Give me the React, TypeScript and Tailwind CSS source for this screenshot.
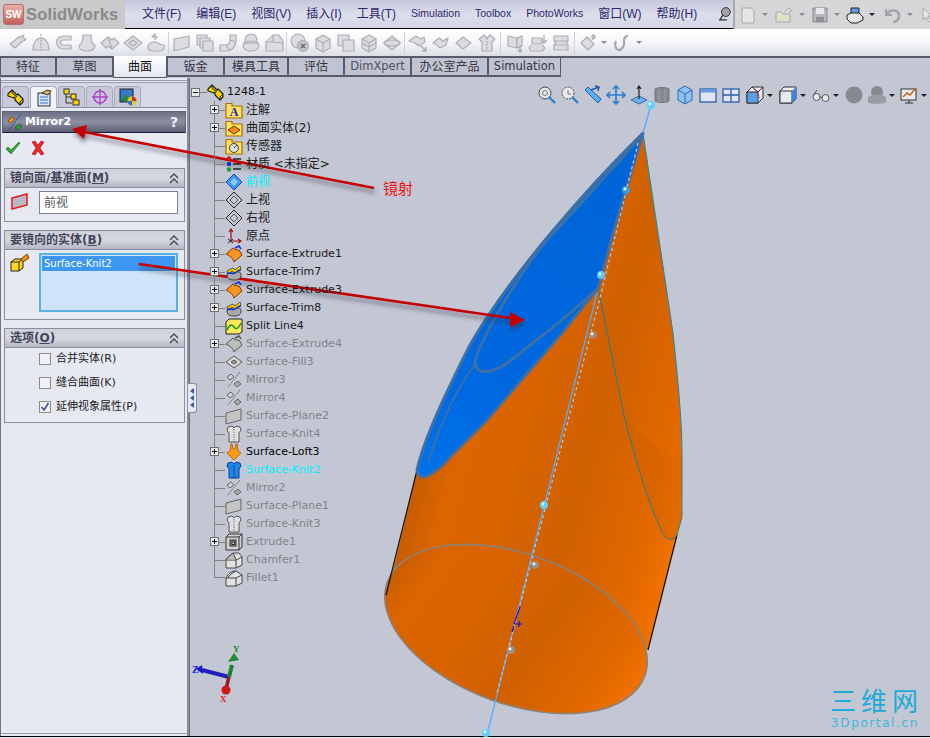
import React from "react";

const GS = { fill: "#dcdce0", stroke: "#adadb4", strokeWidth: 1.2, strokeLinejoin: "round" as const };

const grayIcons: React.ReactNode[] = [
  <g {...GS}><path d="M2 11l9-7 5 3-9 8z" /><path d="M11 4l5-2-1 3 3 1-2 2" /></g>,
  <g {...GS}><path d="M2 17c0-8 4-12 8-12s8 4 8 12z" /><path d="M10 1v18" strokeDasharray="2 1" /></g>,
  <g {...GS}><path d="M17 3H9a6 6 0 0 0 0 13h8v-4H9a2 2 0 0 1 0-5h8z" /></g>,
  <g {...GS}><path d="M6 2h8c0 6 1 8 4 11 0 3-3 5-8 5s-8-2-8-5c3-3 4-5 4-11z" /></g>,
  <g {...GS}><path d="M1 10l7-6 4 3 2-2 5 5-7 6-4-3-2 2z" /><path d="M8 4l4 12" /></g>,
  <g {...GS}><path d="M1 10l9-7 9 7-9 7z" /><path d="M6 10l4-3 4 3-4 3z" /></g>,
  <g {...GS}><path d="M9 7V1l-3 3h6" /><path d="M2 14c0-4 4-5 7-5s4 3 8 3c2 0 2 5-2 6H6c-3 0-4-2-4-4z" /></g>,
  <g {...GS}><path d="M2 6l15-3v11L2 18z" /></g>,
  <g {...GS}><rect x="2" y="2" width="10" height="10" /><rect x="5" y="5" width="10" height="10" /><rect x="8" y="8" width="10" height="10" /></g>,
  <g {...GS}><path d="M2 12h6c3 0 4-2 4-5V2h6v5c0 7-4 11-10 11H2z" /><path d="M8 12l4 6M12 7l6 2" /></g>,
  <g {...GS}><ellipse cx="10" cy="7" rx="6" ry="6" /><ellipse cx="10" cy="13" rx="8" ry="5" /><path d="M2 10h16" /></g>,
  <g {...GS}><path d="M2 9l7-7h6l4 6v10H2z" /><path d="M2 9h7V2M9 9l10 1" /></g>,
  <g {...GS}><circle cx="8" cy="8" r="7" /><circle cx="13" cy="13" r="5.5" fill="#c4c4ca" /><path d="M11 11l4 4m0-4l-4 4" stroke="#6d6d74" strokeWidth="1.6" /></g>,
  <g {...GS}><path d="M3 6l7-4 7 4v9l-7 4-7-4z" /><path d="M3 6l7 4 7-4M10 10v9" /></g>,
  <g {...GS}><rect x="2" y="2" width="11" height="11" /><rect x="7" y="7" width="11" height="11" /></g>,
  <g {...GS}><path d="M3 6l7-4 7 4v9l-7 4-7-4z" /><path d="M3 6l7 4 7-4M10 10v9M3 10l7 4 7-4" /></g>,
  <g {...GS}><path d="M2 10l8-7 8 7-8 7z" /><ellipse cx="10" cy="10" rx="8" ry="3" /></g>,
  <g {...GS}><path d="M1 8l7-5 5 3 3-2 1 5-6 4-4-3z" /><path d="M13 13l5 5m0-4v4h-4" strokeWidth="1.6" /></g>,
  <g {...GS}><path d="M2 10l6-5 4 3 5-3-2 7-6 3-3-3z" /></g>,
  <g {...GS}><path d="M2 10l7-6 8 6-8 6z" /></g>,
  <g {...GS}><path d="M2 6l5-4 3 3 3-3 5 4-3 3v9H5V9z" /><path d="M10 5v13" strokeDasharray="2 1" /></g>,
  <g {...GS}><path d="M3 3l9 2v10l-9-2z" /><path d="M12 5l5-2v10l-5 2z" /><path d="M15 12v7m-2-2l2 2 2-2" strokeWidth="1.6" /></g>,
  <g {...GS}><path d="M4 5h9l3 3-3 3H4z" /><path d="M16 2v8M13 7l3 3 3-3M3 15h11" /><path d="M3 12l-2 3 2 3h11l3-3-3-3" /></g>,
  <g {...GS}><path d="M3 3h14v5l-2 2 2 2v5H3v-5l2-2-2-2z" /><path d="M3 8h14M3 12h14" /></g>,
];

const Drop = ({ dark = false }: { dark?: boolean }) => (
  <span className={`inline-block w-0 h-0 border-x-[3px] border-x-transparent border-t-[3px] ${dark ? "border-t-[#202030]" : "border-t-[#8a8a92]"}`} />
);

const GrayIcon = ({ i }: { i: number }) => (
  <svg width="20" height="20" viewBox="0 0 20 20" className="shrink-0">
    {grayIcons[i]}
  </svg>
);

const PartIcon = ({ s = 17 }: { s?: number }) => (
  <svg width={s} height={s} viewBox="0 0 17 17">
    <path d="M1 5l4-4 5 5 1-1 5 5v3l-3 3-5-5V8L7 9 1 7z" fill="#ffd400" stroke="#202020" strokeWidth="1.2" strokeLinejoin="round" />
    <path d="M5 1v3l5 4M13 16v-3l3-3" fill="none" stroke="#202020" />
  </svg>
);

const Folder = ({ children }: { children?: React.ReactNode }) => (
  <svg width="18" height="18" viewBox="0 0 18 18">
    <path d="M1 5V2.5h6V5h10v12H1z" fill="#ffe45c" stroke="#b06a00" strokeWidth="1.2" strokeLinejoin="round" />
    {children}
  </svg>
);

const Shirt = ({ blue = false }: { blue?: boolean }) => (
  <svg width="18" height="18" viewBox="0 0 18 18">
    <path d="M2 5l1-3 4-1 2 2 2-2 4 1 1 3-2 3v9H4V8z" fill={blue ? "#1f86e8" : "#e0e0e2"} stroke={blue ? "#0d3f98" : "#555"} strokeLinejoin="round" />
    <path d="M9 4v13" stroke={blue ? "#0b2f80" : "#777"} strokeDasharray="1.5 1" />
  </svg>
);

const MirrorIcon = () => (
  <svg width="18" height="18" viewBox="0 0 18 18">
    <path d="M2 6l4-3 3 3-4 3z" fill="#d0d0d2" stroke="#666" />
    <path d="M9 13l4-3 3 3-4 3z" fill="#aaa" stroke="#666" />
    <path d="M15 1L3 16" stroke="#666" strokeDasharray="2 1" fill="none" />
  </svg>
);

const PlaneSheet = () => (
  <svg width="18" height="18" viewBox="0 0 18 18">
    <path d="M1 6l15-4v11L1 17z" fill="#c4c4c4" stroke="#666" strokeLinejoin="round" />
  </svg>
);

const Diamond = () => (
  <svg width="18" height="18" viewBox="0 0 18 18">
    <path d="M1 9l8-8 8 8-8 8z" fill="none" stroke="#222" />
    <path d="M5 9l4-4 4 4-4 4z" fill="none" stroke="#555" />
  </svg>
);

const OrangeSheet = ({ gray = false }: { gray?: boolean }) => (
  <svg width="18" height="18" viewBox="0 0 18 18">
    <path d="M1 9l7-6c2 2 4 2 6 2l3 5-8 7c-1-4-4-6-8-8z" fill={gray ? "#bdbdbd" : "#ff9420"} stroke={gray ? "#555" : "#7a3a00"} strokeLinejoin="round" />
    <path d="M10 3l4-2 2 3" fill="none" stroke={gray ? "#555" : "#1030d0"} strokeWidth="1.4" />
  </svg>
);

const Trim = () => (
  <svg width="18" height="18" viewBox="0 0 18 18">
    <path d="M2 12c0-4 5-3 8-3s6-1 6 3-3 5-7 5-7-1-7-5z" fill="#a8a8a8" stroke="#444" />
    <path d="M2 8l6-3 2 2 5-4 1 3-6 4-3-2-4 3z" fill="#ffd400" stroke="#553" />
    <path d="M2 11c3-3 5 1 8-1s3-3 6-3" fill="none" stroke="#1030d0" strokeWidth="1.4" />
  </svg>
);

const Block = ({ kind }: { kind: "ext" | "cham" | "fil" }) => (
  <svg width="18" height="18" viewBox="0 0 18 18">
    {kind === "ext" ? (
      <g stroke="#333" fill="#d2d2d2">
        <path d="M1 4l3-3h13v13l-3 3H1z" />
        <path d="M1 4h13v13M14 4l3-3" fill="none" />
        <rect x="5" y="7" width="6" height="6" fill="#888" />
        <rect x="7" y="9" width="2.5" height="2.5" fill="#eee" />
      </g>
    ) : (
      <g stroke="#444" fill="#e2e2e2" strokeLinejoin="round">
        <path d={kind === "cham" ? "M1 8l7-6h6l3 4v8l-6 3H1z" : "M1 9c2-5 6-7 10-7l6 4v8l-6 3H1z"} />
        <path d="M1 9h10v8M11 9l6-3" fill="none" />
        <path d={kind === "cham" ? "M1 8l7-6 3 7" : "M3 9c1-3 4-5 8-7"} fill="#bbb" />
      </g>
    )}
  </svg>
);

type Row = { t: string; icon: React.ReactNode; plus?: boolean; c: string; zh?: boolean };
const gray = "text-[#808488]";
const dark = "text-[#1a1a1a]";

const rows: Row[] = [
  { t: "注解", plus: true, c: dark, zh: true, icon: <Folder><text x="9" y="15" fontSize="12" fontWeight="700" textAnchor="middle" fill="#1818c8" fontFamily="Liberation Serif">A</text></Folder> },
  { t: "曲面实体(2)", plus: true, c: dark, zh: true, icon: <Folder><path d="M3 11l6-4 6 4-6 4z" fill="#ff8a10" stroke="#703000" /></Folder> },
  { t: "传感器", c: dark, zh: true, icon: <Folder><circle cx="9" cy="11" r="4.5" fill="#ddd" stroke="#444" /><path d="M9 11l3-3" stroke="#333" /></Folder> },
  {
    t: "材质 <未指定>", c: dark, zh: true, icon: (
      <svg width="18" height="18" viewBox="0 0 18 18">
        <circle cx="4" cy="3.5" r="2.2" fill="#d01818" /><circle cx="4" cy="9" r="2.2" fill="#1830c8" /><circle cx="4" cy="14.5" r="2.2" fill="#18a030" />
        <path d="M8 4h8M8 9h8M8 14h8" stroke="#222" strokeWidth="1.6" />
      </svg>
    ),
  },
  {
    t: "前视", c: "text-[#00f0ff]", zh: true, icon: (
      <svg width="18" height="18" viewBox="0 0 18 18">
        <path d="M1 9l8-8 8 8-8 8z" fill="#3a9cf0" stroke="#1040c0" />
        <path d="M5 9l4-4 4 4-4 4z" fill="#8cc8ff" />
      </svg>
    ),
  },
  { t: "上视", c: dark, zh: true, icon: <Diamond /> },
  { t: "右视", c: dark, zh: true, icon: <Diamond /> },
  {
    t: "原点", c: dark, zh: true, icon: (
      <svg width="18" height="18" viewBox="0 0 18 18">
        <path d="M6 14V3M4 5l2-3 2 3" fill="none" stroke="#a01010" strokeWidth="1.2" />
        <path d="M6 14h9M13 12l3 2-3 2" fill="none" stroke="#a01010" strokeWidth="1.2" />
        <path d="M3 12l5 4m0-4l-5 4" stroke="#222" />
      </svg>
    ),
  },
  { t: "Surface-Extrude1", plus: true, c: dark, icon: <OrangeSheet /> },
  { t: "Surface-Trim7", plus: true, c: dark, icon: <Trim /> },
  { t: "Surface-Extrude3", plus: true, c: dark, icon: <OrangeSheet /> },
  { t: "Surface-Trim8", plus: true, c: dark, icon: <Trim /> },
  {
    t: "Split Line4", c: dark, icon: (
      <svg width="18" height="18" viewBox="0 0 18 18">
        <path d="M1 5l3-3h13v13l-3 2H1z" fill="#ffe85c" stroke="#222" />
        <path d="M2 13c3-6 5-6 7-3s4 2 7-4" fill="none" stroke="#18a018" strokeWidth="1.6" />
      </svg>
    ),
  },
  { t: "Surface-Extrude4", plus: true, c: gray, icon: <OrangeSheet gray /> },
  {
    t: "Surface-Fill3", c: gray, icon: (
      <svg width="18" height="18" viewBox="0 0 18 18">
        <path d="M1 9l8-6 8 6-8 6z" fill="#d8d8d8" stroke="#555" />
        <path d="M6 9l3-2 3 2-3 2z" fill="#999" stroke="#555" />
      </svg>
    ),
  },
  { t: "Mirror3", c: gray, icon: <MirrorIcon /> },
  { t: "Mirror4", c: gray, icon: <MirrorIcon /> },
  { t: "Surface-Plane2", c: gray, icon: <PlaneSheet /> },
  { t: "Surface-Knit4", c: gray, icon: <Shirt /> },
  {
    t: "Surface-Loft3", plus: true, c: "text-black", icon: (
      <svg width="18" height="18" viewBox="0 0 18 18">
        <path d="M6 1h1l1 5h2l1-5h1l1 7 3 2-7 7-7-7 3-2z" fill="#ff9a10" stroke="#a85800" strokeWidth=".8" />
      </svg>
    ),
  },
  { t: "Surface-Knit2", c: "text-[#00f0ff]", icon: <Shirt blue /> },
  { t: "Mirror2", c: gray, icon: <MirrorIcon /> },
  { t: "Surface-Plane1", c: gray, icon: <PlaneSheet /> },
  { t: "Surface-Knit3", c: gray, icon: <Shirt /> },
  { t: "Extrude1", plus: true, c: gray, icon: <Block kind="ext" /> },
  { t: "Chamfer1", c: gray, icon: <Block kind="cham" /> },
  { t: "Fillet1", c: gray, icon: <Block kind="fil" /> },
];

const TreeBox = ({ minus = false }: { minus?: boolean }) => (
  <span className="flex items-center justify-center w-[9px] h-[9px] border border-[#707070] bg-[#e8e8ec] text-[#111]">
    <span className="relative block w-[5px] h-px bg-[#111]">
      {!minus && <span className="absolute left-[2px] top-[-2px] block w-px h-[5px] bg-[#111]" />}
    </span>
  </span>
);

const Chevrons = () => (
  <svg width="10" height="11" viewBox="0 0 10 11" className="shrink-0">
    <path d="M1 5l4-4 4 4M1 10l4-4 4 4" fill="none" stroke="#454552" strokeWidth="1.3" />
  </svg>
);

const Group = ({ title, k, children, className }: { title: string; k: string; children: React.ReactNode; className: string }) => (
  <div className={`ml-[3px] mr-[2px] border border-[#8c8e9e] ${className}`}>
    <div className="flex items-center justify-between h-[19px] pl-[5px] pr-[5px] bg-gradient-to-b from-[#cfd1da] via-[#d6d8e0] to-[#b4b6c4] border-b border-[#8c8e9e]">
      <span className="text-[12px] font-bold text-[#44445a] whitespace-nowrap">
        {title}(<span className="underline">{k}</span>)
      </span>
      <Chevrons />
    </div>
    {children}
  </div>
);

const Check = ({ label, k, on = false }: { label: string; k: string; on?: boolean }) => (
  <div className="flex items-center h-[24px] pl-[34px] gap-[5px]">
    <span className="relative w-[12px] h-[12px] border border-[#8c8c8c] bg-[#f0f0f4] flex items-center justify-center">
      {on && (
        <svg width="10" height="10" viewBox="0 0 10 10">
          <path d="M1.5 5l2.5 3 4.5-7" fill="none" stroke="#40508c" strokeWidth="1.6" />
        </svg>
      )}
    </span>
    <span className="text-[11px] text-[#222] whitespace-nowrap">{label}({k})</span>
  </div>
);

const tabs: [string, string][] = [
  ["特征", "w-[56px]"], ["草图", "w-[57px]"], ["曲面", "w-[54px]"], ["钣金", "w-[57px]"], ["模具工具", "w-[64px]"],
  ["评估", "w-[56px]"], ["DimXpert", "w-[67px]"], ["办公室产品", "w-[77px]"], ["Simulation", "w-[73px]"],
];

const menus = ["文件(F)", "编辑(E)", "视图(V)", "插入(I)", "工具(T)", "Simulation", "Toolbox", "PhotoWorks", "窗口(W)", "帮助(H)"];

const ViewTools = () => (
  <div className="absolute right-[1px] top-[7px] flex items-center h-[20px]">
    <svg width="20" height="20" viewBox="0 0 20 20" className="mr-[3px]"><circle cx="8" cy="8" r="6" fill="#e8e8ee" stroke="#444" /><circle cx="8" cy="8" r="2.5" fill="none" stroke="#777" /><path d="M12 12l6 6" stroke="#2d7ed0" strokeWidth="2.4" /></svg>
    <svg width="20" height="20" viewBox="0 0 20 20" className="mr-[3px]"><circle cx="8" cy="8" r="6" fill="#e8e8ee" stroke="#444" strokeDasharray="2 1" /><path d="M8 5v4h3" fill="none" stroke="#777" /><path d="M12 12l6 6" stroke="#2d7ed0" strokeWidth="2.4" /></svg>
    <svg width="20" height="20" viewBox="0 0 20 20" className="mr-[3px]"><path d="M2 5l3-3 13 12-3 4z" fill="#5fb0f0" stroke="#1c5ca8" /><path d="M8 5l8-3M12 1l4 1-1 4" fill="none" stroke="#1c5ca8" strokeWidth="1.5" /></svg>
    <svg width="20" height="20" viewBox="0 0 20 20" className="mr-[3px]"><path d="M10 1v18M1 10h18M7 4l3-3 3 3M7 16l3 3 3-3M4 7l-3 3 3 3M16 7l3 3-3 3" fill="none" stroke="#2d7ed0" strokeWidth="1.7" /></svg>
    <svg width="20" height="20" viewBox="0 0 20 20" className="mr-[3px]"><path d="M2 15l8-4 8 4-8 4z" fill="#72aee8" stroke="#2d6cb0" /><path d="M10 14V2M8 4l2-3 2 3" fill="none" stroke="#222" strokeWidth="1.2" /></svg>
    <svg width="20" height="20" viewBox="0 0 20 20" className="mr-[3px]"><path d="M3 4c3-2 11-2 14 0v12c-3 2-11 2-14 0z" fill="#85888f" stroke="#777" /><path d="M7 4v13M13 4v13" stroke="#a0a2aa" /></svg>
    <svg width="20" height="20" viewBox="0 0 20 20" className="mr-[3px]"><path d="M3 5l7-4 7 4v10l-7 4-7-4z" fill="#8cc2f0" stroke="#2d6cb0" /><path d="M3 5l7 4 7-4M10 9v10" fill="none" stroke="#2d6cb0" /></svg>
    <svg width="20" height="20" viewBox="0 0 20 20" className="mr-[3px]"><rect x="2" y="4" width="16" height="13" fill="#dfe6f2" stroke="#2d5ca8" strokeWidth="1.3" /><rect x="2" y="4" width="16" height="3.5" fill="#6a9ade" /></svg>
    <svg width="20" height="20" viewBox="0 0 20 20" className="mr-[4px]"><rect x="2" y="4" width="16" height="13" fill="#dfe6f2" stroke="#2d5ca8" strokeWidth="1.3" /><path d="M2 10h16M10 4v13" stroke="#2d5ca8" strokeWidth="1.3" /></svg>
    <svg width="20" height="20" viewBox="0 0 20 20"><path d="M2 7l5-5h11v11l-5 5H2z" fill="#e8e8ee" stroke="#333" /><rect x="2" y="7" width="11" height="11" fill="#5aa0e8" stroke="#333" /><path d="M7 2l6 5 5-5" fill="none" stroke="#333" /><path d="M10 4l5 9" stroke="#d02020" strokeDasharray="2 1" /></svg>
    <span className="ml-[2px] mr-[5px] flex"><Drop dark /></span>
    <svg width="20" height="20" viewBox="0 0 20 20"><path d="M2 6l4-4h12v12l-4 4H2z" fill="#eef0f6" stroke="#333" /><rect x="2" y="6" width="12" height="12" fill="#e4eaf4" stroke="#333" /><path d="M14 6l4-4v12l-4 4z" fill="#3e86dc" /></svg>
    <span className="ml-[2px] mr-[5px] flex"><Drop dark /></span>
    <svg width="20" height="20" viewBox="0 0 20 20"><circle cx="5.5" cy="12" r="3.5" fill="#e8e8ee" stroke="#555" /><circle cx="14.5" cy="13" r="3.5" fill="#e8e8ee" stroke="#555" /><path d="M9 12l2 .5M2 11l4-6" fill="none" stroke="#555" /></svg>
    <span className="ml-[2px] mr-[5px] flex"><Drop dark /></span>
    <svg width="20" height="20" viewBox="0 0 20 20" className="mr-[3px]"><circle cx="10" cy="10" r="8.5" fill="#888a92" /></svg>
    <svg width="20" height="20" viewBox="0 0 20 20"><circle cx="10" cy="7" r="6" fill="#888a92" /><path d="M1 12l4-2h10l4 2v6l-9 1-9-1z" fill="#9a9ca4" /></svg>
    <span className="ml-[2px] mr-[4px] flex"><Drop dark /></span>
    <svg width="20" height="20" viewBox="0 0 20 20"><rect x="2" y="4" width="15" height="11" fill="#e8eaf0" stroke="#333" /><path d="M4 12l4-4 3 2 6-7" fill="none" stroke="#c86818" strokeWidth="1.6" /><path d="M6 18h8M10 15v3" stroke="#333" /></svg>
    <span className="ml-[2px] mr-[2px] flex"><Drop dark /></span>
  </div>
);

const RIGHT_EDGE = "L673 333 C677 370 682 420 682 453 L682 517 L677 535";

const Model = () => (
  <svg className="absolute left-0 top-0 pointer-events-none" width="930" height="738" viewBox="0 0 930 738">
    <defs>
      <linearGradient id="body" gradientUnits="userSpaceOnUse" x1="385" y1="560" x2="680" y2="640">
        <stop offset="0" stopColor="#c25a00" />
        <stop offset=".14" stopColor="#dc6500" />
        <stop offset=".4" stopColor="#d66200" />
        <stop offset=".55" stopColor="#cf6000" />
        <stop offset=".8" stopColor="#e26800" />
        <stop offset="1" stopColor="#ff7a00" />
      </linearGradient>
      <linearGradient id="blue" gradientUnits="userSpaceOnUse" x1="640" y1="140" x2="420" y2="470">
        <stop offset="0" stopColor="#0064d8" />
        <stop offset=".75" stopColor="#0068e0" />
        <stop offset="1" stopColor="#0072ea" />
      </linearGradient>
      <filter id="sh" x="-5%" y="-30%" width="110%" height="160%">
        <feDropShadow dx="1" dy="4" stdDeviation="2" floodColor="#303040" floodOpacity=".55" />
      </filter>
    </defs>
    {/* body */}
    <path d={`M643 133 ${RIGHT_EDGE} L648 650 L386 600 L417 470 L433 420 L598 288 Z`} fill="url(#body)" />
    <ellipse cx="516" cy="629" rx="137" ry="75" transform="rotate(20 516 629)" fill="url(#body)" stroke="#8c8278" strokeWidth="1.6" />
    <path d={`M643 133 ${RIGHT_EDGE}`} fill="none" stroke="#1a86a8" strokeWidth="1" />
    <path d="M417 470 L386 595M677 535 L648 650" stroke="#111" strokeWidth="1.2" />
    {/* cut on the right */}
    <path d="M627 420 C632 445 648 505 660 527 C664 540 672 543 677 535 L682 517 L682 453 C672 470 640 430 627 420z" fill="#c45c00" fillOpacity=".25" />
    <path d="M598 288 L625 420 C630 440 648 505 660 527 C664 540 672 543 677 535" fill="none" stroke="#17809c" strokeWidth="1" />
    {/* blue surface */}
    <path d="M643 133 C590 185 510 275 470 345 C450 385 425 435 417 470 C418 476 421 477 424 477 C432 475 445 464 450 457 C465 442 487 420 487 420 L562 333 L598 288 L613 233 Z" fill="url(#blue)" stroke="#3b70a8" strokeWidth="3" strokeLinejoin="round" />
    <path d="M640 138 C620 160 580 205 547 240 C520 272 490 325 480 347 C475 358 472 368 481 371 C495 375 515 358 530 345 C550 330 580 305 598 288" fill="none" stroke="#3b70a8" strokeWidth="3" />
    <path d="M475 365 C455 390 440 425 428 462" fill="none" stroke="#3b70a8" strokeWidth="2" />
    {/* axis */}
    <path d="M651 105 L643 133M597 293 L487 735" stroke="#5aa8ff" strokeWidth="1.3" fill="none" />
    <path d="M638 143 L600 298 L497 693" fill="none" stroke="#a8d0f8" strokeWidth="1.2" strokeDasharray="3 3" />
    <path d="M520 607l-6 17M515 624h7M519 621v6M514 626l-2 6" stroke="#1010e0" strokeWidth="1.2" fill="none" />
    {([[651, 105, "#5cd0ff"], [626, 190, "#3a9ee0"], [601, 275, "#5cc8f8"], [593, 335, "#a88a70"], [544, 505, "#5cd0ff"], [535, 565, "#9a9084"], [511, 650, "#9a9084"], [486, 733, "#5cd0ff"]] as [number, number, string][]).map(([x, y, c]) => (
      <g key={y}>
        <circle cx={x} cy={y} r="4" fill={c} />
        <circle cx={x - 1} cy={y - 1} r="1.4" fill="#e4fbff" />
      </g>
    ))}
    {/* triad */}
    <path d="M229 677L202 670" stroke="#2020b8" strokeWidth="4" />
    <path d="M202 665l-6 4 7 5z" fill="#1818c8" />
    <path d="M229 677l3-12" stroke="#208030" strokeWidth="4" />
    <path d="M228 662l6-9 5 7z" fill="#1c8a30" />
    <path d="M229 677l-3 12" stroke="#902020" strokeWidth="3.5" />
    <circle cx="226" cy="690" r="4.5" fill="#d01818" />
    {/* red arrows */}
    <g filter="url(#sh)">
      <path d="M374 188L84 132" stroke="#c40000" strokeWidth="2.6" />
      <path d="M72 129L87 125L84 139Z" fill="#c40000" />
      <path d="M139 264L510 318" stroke="#c40000" strokeWidth="2.6" />
      <path d="M525 320L510 312L510 327Z" fill="#c40000" />
    </g>
  </svg>
);

export default function App() {
  return (
    <div className="relative w-[930px] h-[738px] overflow-hidden flex flex-col bg-[#c3c7d3] font-['DejaVu_Sans','Noto_Sans_CJK_SC',sans-serif]">
      {/* title and menu bar */}
      <div className="flex h-[29px] shrink-0">
        <div className="flex shrink-0 items-center w-[125px] pl-[3px] gap-[2px] bg-[#c9c9c9]">
          <span className="flex items-center justify-center w-[21px] h-[21px] rounded-[3px] border border-[#b07070] bg-gradient-to-b from-[#e8b0a8] to-[#c06058] text-[10px] font-bold text-white font-['Liberation_Sans',sans-serif]">SW</span>
          <span className="text-[16.5px] font-bold text-[#888a8c] tracking-[0.2px] font-['Liberation_Sans',sans-serif]">SolidWorks</span>
        </div>
        <div className="flex min-w-0 items-center flex-1 pl-[17px] gap-[15px] border-b border-black bg-gradient-to-b from-[#c4c6dc] via-[#dcdeec] to-[#d4d6e6] text-[#28286c] whitespace-nowrap font-['Liberation_Sans','Noto_Sans_CJK_SC',sans-serif]">
          {menus.map((m) => (
            <span key={m} className={/[(]/.test(m) ? "text-[12px]" : "text-[10.5px]"}>{m}</span>
          ))}
          <svg width="16" height="16" viewBox="0 0 16 16" className="ml-[5px]"><circle cx="9" cy="6" r="4.5" fill="#a0a0a4" stroke="#333" /><path d="M6 9l-3 5M2 14h8" stroke="#333" strokeWidth="1.4" /></svg>
        </div>
        <div className="flex shrink-0 items-center w-[197px] pl-[3px] bg-[#d6d6d8] border-l-2 border-[#a8a8b0]">
          <svg width="18" height="18" viewBox="0 0 18 18" className="ml-[1px] shrink-0"><path d="M3 2h9l3 3v12H3z" fill="#e6e6e8" stroke="#a8a8ac" /></svg>
          <span className="ml-[5px] mr-[6px] flex"><Drop /></span>
          <svg width="20" height="18" viewBox="0 0 20 18" className="shrink-0"><path d="M2 6h5l2 2h7v8H2z" fill="#e2e0c8" stroke="#a8a8ac" /><path d="M10 6l5-4 3 3-3 1" fill="#ddd" stroke="#a8a8ac" /></svg>
          <span className="ml-[5px] mr-[6px] flex"><Drop /></span>
          <svg width="18" height="18" viewBox="0 0 18 18" className="shrink-0"><path d="M2 2h14v14H2z" fill="#b8b8bc" stroke="#8a8a90" /><rect x="5" y="2" width="8" height="6" fill="#e8e8ea" /><rect x="5" y="11" width="8" height="5" fill="#8f8f94" /></svg>
          <span className="ml-[5px] mr-[6px] flex"><Drop /></span>
          <svg width="18" height="18" viewBox="0 0 18 18" className="shrink-0"><path d="M5 2h8v6H5z" fill="#5a9ee0" stroke="#222" /><path d="M1 9l4-2h8l4 4v3l-6 3H5L1 13z" fill="#e8e8e8" stroke="#222" /></svg>
          <span className="ml-[5px] mr-[9px] flex"><Drop dark /></span>
          <svg width="18" height="18" viewBox="0 0 18 18" className="shrink-0"><path d="M3 8c3-5 12-5 12 2 0 4-3 6-6 6" fill="none" stroke="#a4a4a8" strokeWidth="2.6" /><path d="M2 3v6h6" fill="none" stroke="#a4a4a8" strokeWidth="2" /></svg>
          <span className="ml-[5px] mr-[8px] flex"><Drop /></span>
          <svg width="12" height="18" viewBox="0 0 12 18" className="shrink-0"><path d="M2 2v12l3-3 3 5 2-1-3-5h4z" fill="#e6e6e8" stroke="#a8a8ac" /></svg>
        </div>
      </div>

      {/* command toolbar */}
      <div className="flex items-center h-[27px] shrink-0 pl-[6px] bg-gradient-to-b from-white via-[#f6f6fa] to-[#dcdee6]">
        {grayIcons.map((_, i) => (
          <React.Fragment key={i}>
            {(i === 7 || i === 12 || i === 17) && <span className="w-px h-[22px] bg-[#d0d0d6] mx-[1px]" />}
            {i === 21 && <span className="w-px h-[22px] bg-[#d0d0d6] mx-[2px]" />}
            <span className="flex justify-center w-[23px]"><GrayIcon i={i} /></span>
          </React.Fragment>
        ))}
        <span className="w-px h-[22px] bg-[#d0d0d6] mx-[2px]" />
        <svg width="20" height="20" viewBox="0 0 20 20" className="ml-[1px]"><g {...GS}><path d="M3 10l6-6 7 7-6 6z" /><path d="M15 1v6M12 4h6M14 2l3 4m0-4l-3 4" /></g></svg>
        <span className="ml-[3px] mr-[6px] flex"><Drop /></span>
        <svg width="18" height="20" viewBox="0 0 18 20"><path d="M15 3c-5 0-4 6-4 8s-2 6-5 6-5-5-3-9" fill="none" stroke="#a6a6ae" strokeWidth="2.2" /></svg>
        <span className="ml-[5px] flex"><Drop /></span>
      </div>

      {/* tabs */}
      <div className="relative flex h-[22px] shrink-0 border-t-2 border-[#565a6c] text-[12px] text-[#35353f] whitespace-nowrap">
        {tabs.map(([t, w], i) => (
          <div
            key={t}
            className={`flex items-center justify-center pt-px ${w} ${
              i === 2
                ? "h-[23px] -mt-[2px] bg-gradient-to-b from-white to-[#e4e8f2] border-b-2 border-x border-[#565a6c] text-[#111] relative"
                : "h-[19px] bg-[#c0c4d2] border-x border-b-2 border-[#565a6c]"
            } ${i === 6 ? "text-[#50505c]" : ""} ${i === 8 || i === 6 ? "text-[11.5px]" : ""}`}
          >
            {t}
          </div>
        ))}
      </div>

      {/* main */}
      <div className="flex flex-1 min-h-0">
        <div className="relative w-[187px] shrink-0 border-l border-[#70748a] bg-[#e6e8f2] text-[#222]">
          <div className="h-[3px] mt-[2px] border-y border-[#9a9cae]" />
          <div className="flex items-end h-[25px] pl-[1px] gap-[1px] border-b border-[#8a8ca0] bg-[#d6d8e8]">
            {[
              <PartIcon s={17} key="a" />,
              <svg key="b" width="18" height="18" viewBox="0 0 18 18"><rect x="3" y="4" width="12" height="13" fill="#d0e8ff" stroke="#333" /><path d="M5 8h8M5 11h8M5 14h8" stroke="#3a70c8" /><path d="M7 4l5-3 4 1-3 4z" fill="#e8a860" stroke="#333" /></svg>,
              <svg key="c" width="18" height="18" viewBox="0 0 18 18"><path d="M3 5v10h6M3 9h6" fill="none" stroke="#333" /><rect x="1" y="1" width="5" height="5" fill="#ffd400" stroke="#333" /><rect x="8" y="6" width="5" height="5" fill="#ffd400" stroke="#333" /><rect x="10" y="12" width="6" height="5" fill="#ffd400" stroke="#333" /></svg>,
              <svg key="d" width="18" height="18" viewBox="0 0 18 18"><circle cx="9" cy="9" r="6" fill="none" stroke="#b040c8" strokeWidth="1.6" /><path d="M9 1v16M1 9h16" stroke="#b040c8" strokeWidth="1.3" /></svg>,
              <svg key="e" width="18" height="18" viewBox="0 0 18 18"><rect x="1" y="1" width="13" height="13" fill="#3878c8" stroke="#222" /><path d="M2 13l5-7 4 7z" fill="#288838" /><circle cx="13" cy="13" r="4.5" fill="#d8d020" /><path d="M13 8.5a4.5 4.5 0 0 1 4.5 4.5H13z" fill="#d03020" /><path d="M13 13v4.5A4.5 4.5 0 0 1 8.5 13z" fill="#3070d8" /></svg>,
            ].map((ic, i) => (
              <span
                key={i}
                className={`flex items-center justify-center w-[27px] h-[21px] rounded-t-[4px] border border-b-0 border-[#a8aabc] ${i === 1 ? "bg-[#f2f4fa] h-[22px] -mb-px" : "bg-[#c8cad8]"}`}
              >
                {ic}
              </span>
            ))}
          </div>

          <div className="flex items-center justify-between ml-[1px] mr-[1px] mt-[3px] h-[22px] pl-[3px] pr-[7px] border border-[#606278] border-b-[#1c1c3c] bg-gradient-to-b from-[#6c6e82] via-[#8e90a2] to-[#5c5e74]">
            <span className="flex items-center gap-[1px]">
              <svg width="18" height="18" viewBox="0 0 18 18"><path d="M2 8l4-4 3 2-4 4z" fill="#f09018" stroke="#603000" strokeWidth=".6" /><path d="M9 15l4-4 3 2-4 4z" fill="#28a038" stroke="#0a4010" strokeWidth=".6" /><path d="M15 1L3 17" stroke="#1040d0" strokeDasharray="2 1" /></svg>
              <span className="text-[11px] font-bold text-white">Mirror2</span>
            </span>
            <span className="text-[14px] font-bold text-[#f0f0f4]">?</span>
          </div>

          <div className="flex items-center h-[32px] pl-[4px] gap-[9px] mt-[1px] pb-[4px]">
            <svg width="16" height="16" viewBox="0 0 16 16"><path d="M1 9l5 5L15 3l-1-1-8 8-3-3z" fill="#38a838" stroke="#186818" strokeWidth=".7" /></svg>
            <svg width="16" height="16" viewBox="0 0 16 16"><path d="M2 2l3-1 3 4 3-4 3 1-4 6 4 6-3 1-3-4-3 4-3-1 4-6z" fill="#e82828" stroke="#981010" strokeWidth=".6" /></svg>
          </div>

          <Group title="镜向面/基准面" k="M" className="h-[54px] mt-[2px]">
            <div className="flex items-start pt-[3px] pl-[5px]">
              <svg width="20" height="18" viewBox="0 0 20 18" className="mt-[1px]"><path d="M2 6l15-4v11L2 17z" fill="#b8bac8" stroke="#e81818" strokeWidth="1.5" /></svg>
              <div className="ml-[9px] w-[139px] h-[23px] flex items-center pl-[4px] bg-white border border-[#80849a] text-[12px] text-[#555]">前视</div>
            </div>
          </Group>

          <Group title="要镜向的实体" k="B" className="h-[90px] mt-[8px]">
            <div className="flex items-start pt-[3px] pl-[5px]">
              <svg width="20" height="20" viewBox="0 0 20 20"><path d="M1 9l4-3h8v9l-4 3H1z" fill="#ffd820" stroke="#222" /><path d="M1 9h8v9M9 9l4-3" fill="none" stroke="#222" /><path d="M11 6l6-5 2 4-6 4z" fill="#f09018" stroke="#704000" /></svg>
              <div className="ml-[9px] w-[139px] h-[59px] border-2 border-[#5ab0e0] bg-[#cfe4f8] p-px">
                <div className="h-[15px] pl-[2px] bg-[#3d97f0] text-white text-[10px] leading-[15px]">Surface-Knit2</div>
              </div>
            </div>
          </Group>

          <Group title="选项" k="O" className="h-[95px] mt-[8px]">
            <div className="-mt-[1px]">
              <Check label="合并实体" k="R" />
              <Check label="缝合曲面" k="K" />
              <Check label="延伸视象属性" k="P" on />
            </div>
          </Group>

          <div className="absolute left-[187px] top-[305px] z-10 flex flex-col items-center justify-center gap-[1px] w-[9px] h-[30px] rounded-r-[3px] border border-l-0 border-[#8a8ca0] bg-[#e6e8f2] text-[#3a5a9c]">
            {[0, 1, 2].map((n) => (
              <span key={n} className="w-0 h-0 border-y-[3px] border-y-transparent border-r-[4px] border-r-[#3a5a9c]" />
            ))}
          </div>
          <div className="absolute left-0 right-0 bottom-[2px] h-px bg-[#9a9cae]" />
        </div>
        <div className="w-[3px] shrink-0 bg-[#8a8c9c] border-r border-[#6c6e80]" />

        {/* canvas */}
        <div className="relative flex-1 bg-[#c3c7d3]">
          <div className="relative z-10 pt-[5px] whitespace-nowrap">
            <div className="flex items-center h-[18px] pl-[1px]">
              <TreeBox minus />
              <span className="w-[7px] h-px bg-[#808080]" />
              <PartIcon s={17} />
              <span className="ml-[3px] text-[11px] text-[#111]">1248-1</span>
            </div>
            {rows.map((r, i) => (
              <div key={r.t} className="flex items-center h-[18px] pl-[24px]">
                <div className={`relative flex items-center w-[11px] border-l border-[#808080] ${i === rows.length - 1 ? "h-[9px] self-start border-b" : "h-[18px]"}`}>
                  {i !== rows.length - 1 && <span className="w-full h-px bg-[#808080]" />}
                  {r.plus && <span className="absolute left-[-5px] top-[4px]"><TreeBox /></span>}
                </div>
                <span className="flex items-center justify-center w-[18px] h-[18px]">{r.icon}</span>
                <span className={`ml-[3px] ${r.zh ? "text-[12px]" : "text-[11px]"} ${r.c}`}>{r.t}</span>
              </div>
            ))}
          </div>
          <ViewTools />
          <div className="absolute right-[10px] bottom-[7px] flex flex-col items-center text-[#1eaad8]">
            <span className="text-[26px] leading-[26px] tracking-[5px] -mr-[3px] font-['Noto_Sans_CJK_SC',sans-serif]">三维网</span>
            <span className="text-[12px] leading-[12px] mt-[4px] tracking-[1.6px] text-[#3cb8e0]">3Dportal.cn</span>
          </div>
          <span className="absolute left-[193px] top-[99px] text-[15px] text-[#ee1111] font-['Noto_Sans_CJK_SC',sans-serif]">镜射</span>
        </div>
      </div>
      <div className="h-[2px] shrink-0 border-t border-black bg-[#e6e8f2]" />

      <Model />
      <span className="absolute left-[233px] top-[643px] text-[9px] font-bold text-[#1a8a30] font-['Liberation_Serif',serif]">Y</span>
      <span className="absolute left-[192px] top-[662px] text-[10px] font-bold text-[#1818e0] font-['Liberation_Serif',serif]">Z</span>
      <span className="absolute left-[220px] top-[693px] text-[9px] font-bold text-[#e81818] font-['Liberation_Serif',serif]">X</span>
    </div>
  );
}
